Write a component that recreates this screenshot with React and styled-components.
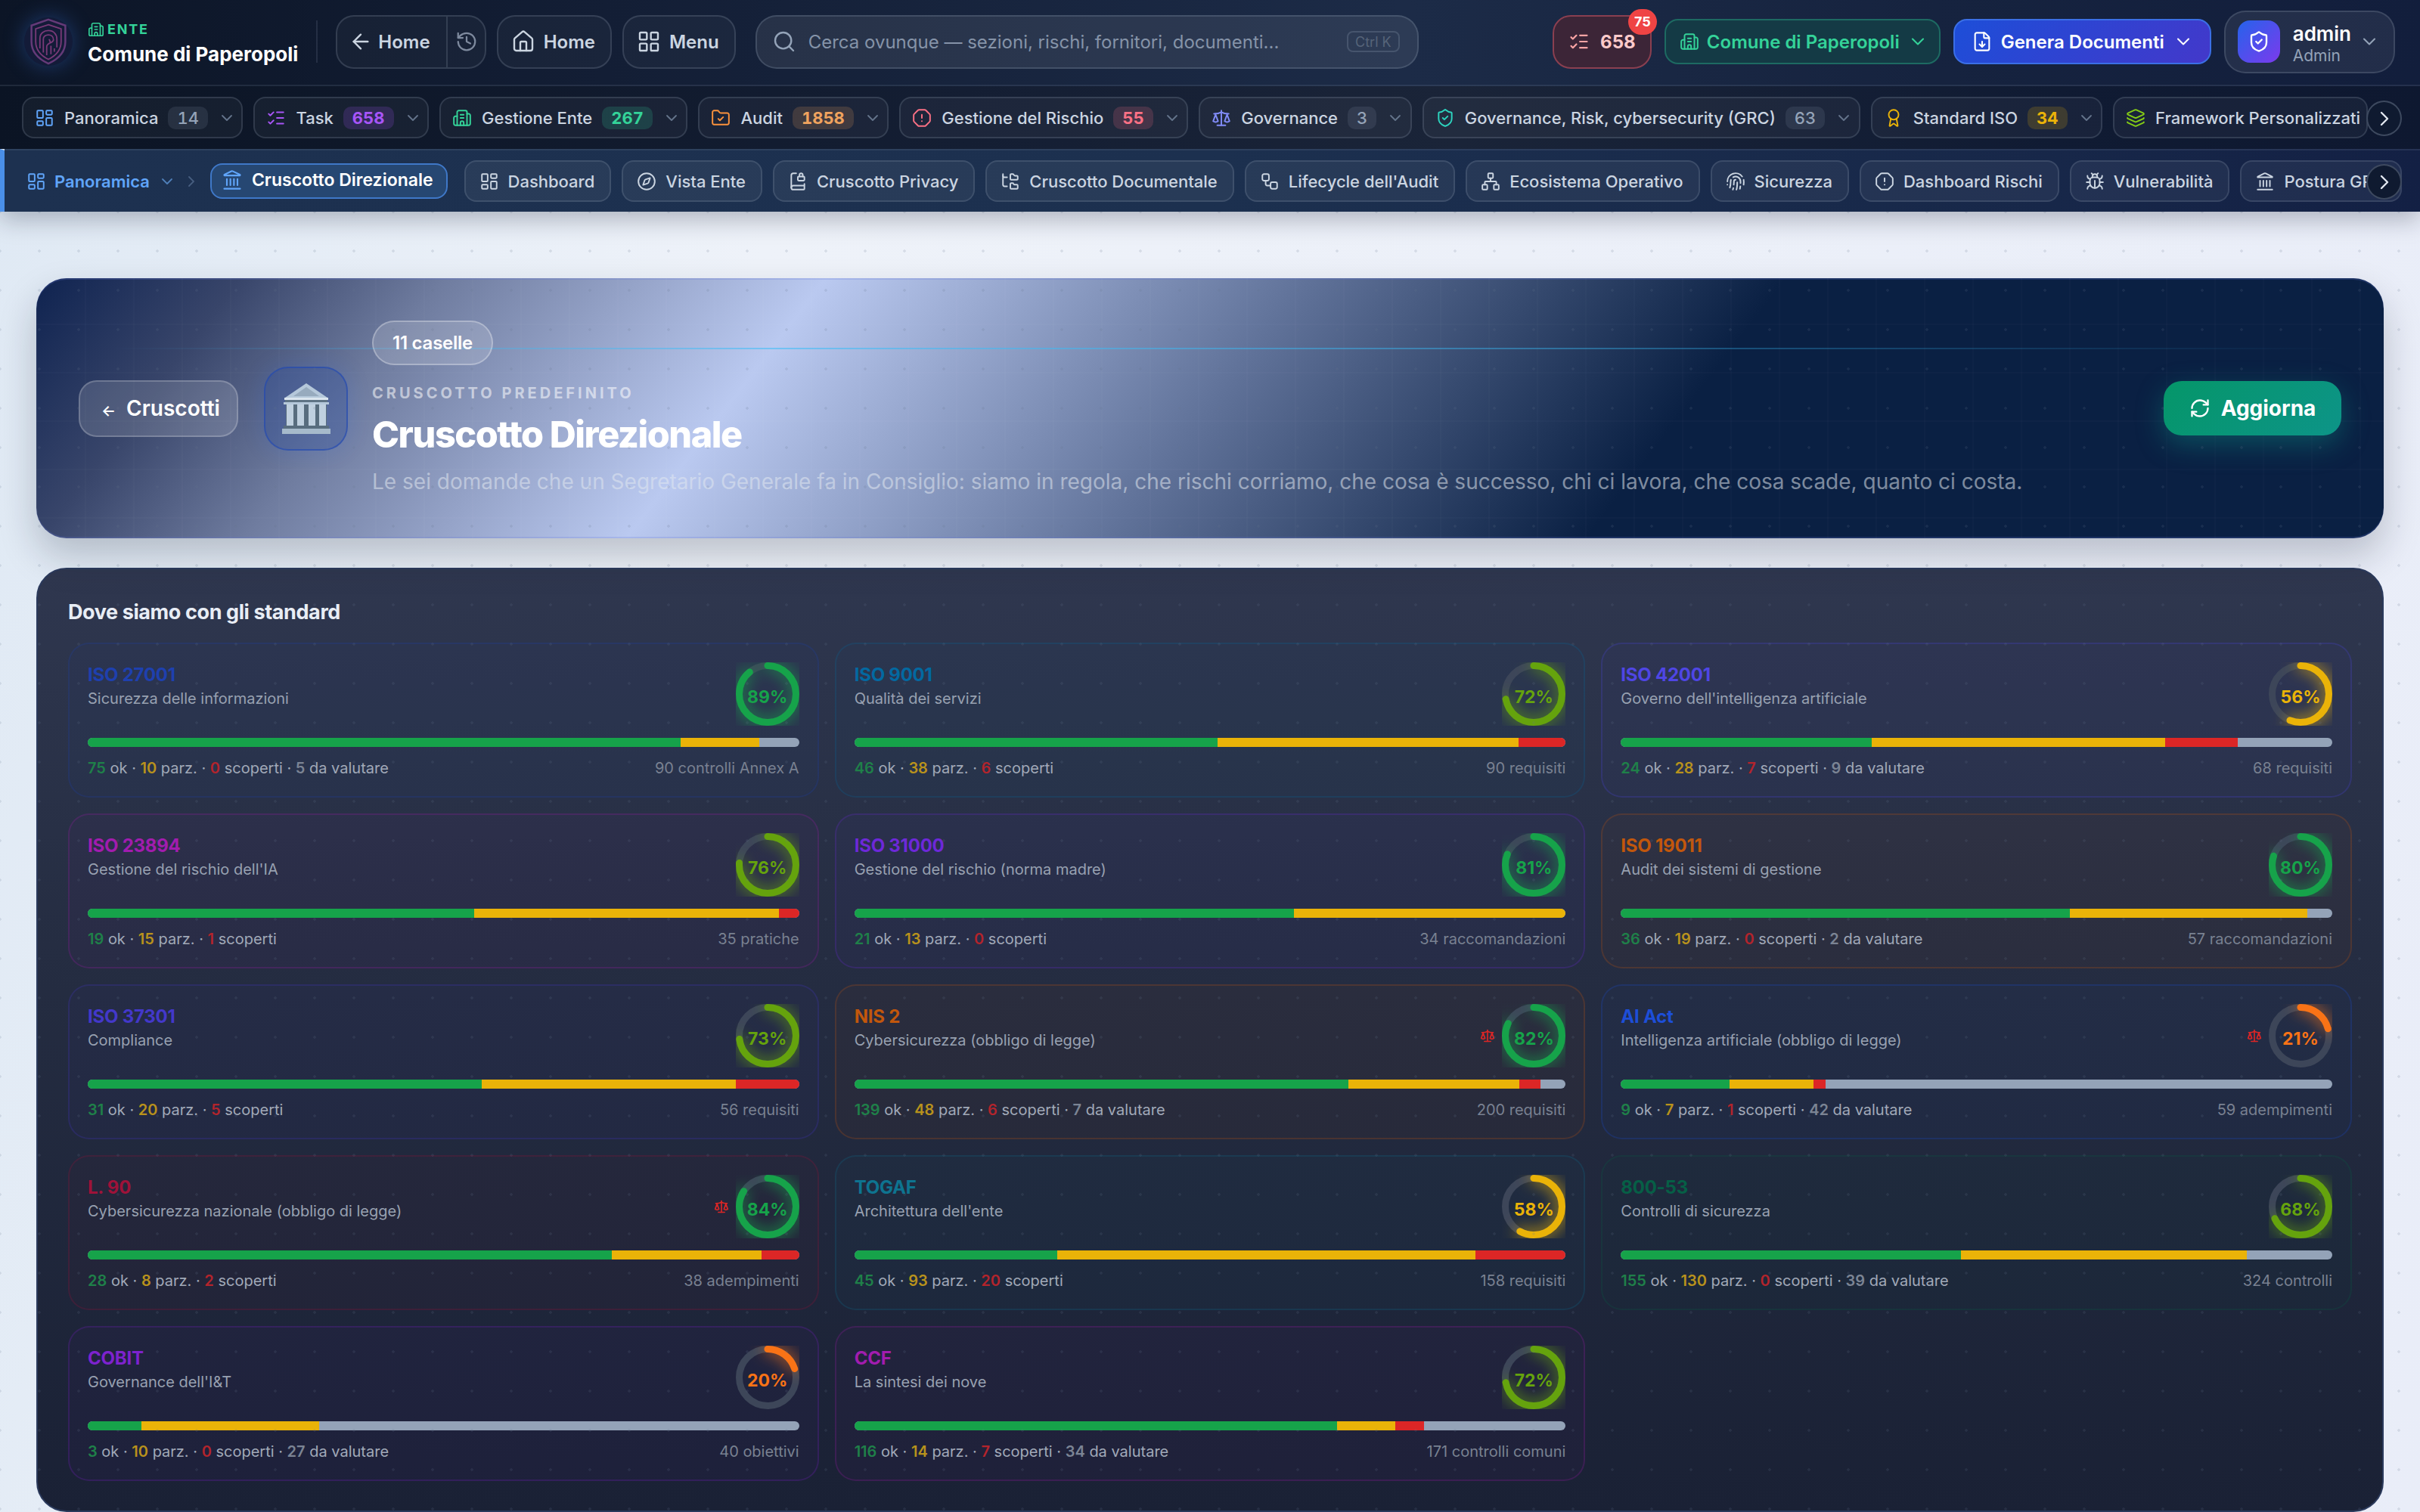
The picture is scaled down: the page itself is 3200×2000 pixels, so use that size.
import React from 'react';
import styled, { createGlobalStyle } from 'styled-components';
import {
  ArrowLeft, History, House, LayoutGrid, LayoutDashboard, Search, ListChecks, Building2, FolderCheck,
  OctagonAlert, Scale, ShieldCheck, Award, Layers, ChevronDown, ChevronRight, Landmark, Compass,
  BookLock, FolderTree, Workflow, Network, Fingerprint, Bug, FileDown, RefreshCw,
} from 'lucide-react';

const Global = createGlobalStyle`
  html, body { margin: 0; padding: 0; height: 2000px; overflow: hidden; }
  body { font-family: Inter, "Noto Sans", sans-serif; background: #eef1f8; }
  * { box-sizing: border-box; }
`;

const Page = styled.div`
  width: 3200px; height: 2000px; overflow: hidden; display: flex; flex-direction: column;
  background: linear-gradient(100deg, #dfe9f4 0%, #eef2f9 30%, #e9edf8 100%);
`;
const Header = styled.header`
  flex: none; position: relative; z-index: 2;
  box-shadow: 0 10px 30px rgba(15, 23, 42, .28);
`;
const TopRow = styled.div`
  height: 114px; display: flex; align-items: center; padding: 0 33px 2px 32px;
  background: linear-gradient(90deg, #0c1526 0%, #131e35 25%, #1c2b47 58%, #16233f 80%, #121e3c 100%);
  border-bottom: 2px solid rgba(148, 163, 184, .14);
`;
const Brand = styled.div`display: flex; align-items: center; gap: 20px; padding-right: 24px; border-right: 2px solid rgba(148,163,184,.16); height: 56px;`;
const LogoWrap = styled.div`width: 64px; height: 64px; flex: none; filter: drop-shadow(0 0 14px rgba(59,130,246,.35));`;
const BrandText = styled.div`display: flex; flex-direction: column; gap: 5px; padding-top: 6px;`;
const Eyebrow = styled.div`display: flex; align-items: center; gap: 4px; color: #34d399; font-size: 18px; font-weight: 700; letter-spacing: .1em; line-height: 22px;`;
const BrandName = styled.div`color: #fff; font-size: 26px; font-weight: 700; line-height: 34px; white-space: nowrap;`;
const TopGroup = styled.div`display: flex; align-items: center; gap: 14px; margin-left: 24px;`;
const GhostBtn = styled.div`
  height: 71px; display: flex; align-items: center; gap: 11px; padding: 0 20px 0 17px; color: #cbd5e1;
  font-size: 24px; font-weight: 600; border: 2px solid rgba(148,163,184,.22); border-radius: 24px;
  background: rgba(255,255,255,.03); white-space: nowrap;
`;
const Split = styled(GhostBtn)`padding: 0; gap: 0; overflow: hidden;`;
const SplitPart = styled.div`
  display: flex; align-items: center; gap: 7px; height: 100%; padding: ${p => p.$pad};
  & + & { border-left: 2px solid rgba(148,163,184,.22); }
`;
const SearchBox = styled.div`
  width: 877px; height: 71px; margin-left: 26px; display: flex; align-items: center; gap: 16px; padding: 0 23px 0 20px;
  background: rgba(255,255,255,.08); border: 2px solid rgba(148,163,184,.24); border-radius: 28px;
  color: #8593a8; font-size: 24px; white-space: nowrap;
`;
const SearchText = styled.span`flex: 1;`;
const Kbd = styled.span`
  height: 28px; padding: 0 9px; display: flex; align-items: center; font-size: 18px; color: #566479;
  border: 2px solid rgba(148,163,184,.25); border-radius: 8px;
`;
const TopRight = styled.div`margin-left: auto; display: flex; align-items: center; gap: 17px;`;
const Notif = styled.div`
  position: relative; width: 131px; height: 71px; display: flex; align-items: center; justify-content: center; gap: 14px;
  color: #fecaca; font-size: 24px; font-weight: 700; background: #3c2537; border: 2px solid #8a3f50; border-radius: 24px;
`;
const NotifBadge = styled.span`
  position: absolute; top: -10px; right: -9px; width: 38px; height: 34px; border-radius: 17px; background: #ef4444;
  color: #fff; font-size: 18px; font-weight: 700; display: flex; align-items: center; justify-content: center;
`;
const Pill = styled.div`
  height: 60px; display: flex; align-items: center; gap: ${p => p.$gap}px; padding: ${p => p.$pad}; font-size: 24px; font-weight: 600;
  border-radius: 18px; white-space: nowrap; color: ${p => p.$fg}; background: ${p => p.$bg}; border: 2px solid ${p => p.$bd};
`;
const UserBox = styled.div`
  height: 83px; display: flex; align-items: center; gap: 10px; padding: 0 18px 0 16px;
  background: rgba(255,255,255,.07); border: 2px solid rgba(148,163,184,.22); border-radius: 28px;
`;
const Avatar = styled.div`
  width: 56px; height: 56px; margin-right: 7px; border-radius: 16px; background: linear-gradient(135deg, #2563eb, #7c3aed);
  display: flex; align-items: center; justify-content: center; color: #fff;
`;
const UserText = styled.div`display: flex; flex-direction: column; padding-top: 8px;`;
const UserName = styled.span`color: #fff; font-size: 26px; font-weight: 600; line-height: 30px;`;
const UserRole = styled.span`color: #94a3b8; font-size: 21px; line-height: 28px;`;

const NavRow = styled.div`
  position: relative; display: flex; align-items: center;
  height: ${p => p.$h}px; padding: 0 24px 0 ${p => p.$left}px;
  background: ${p => p.$bg};
  ${p => p.$accent ? 'border-left: 6px solid #4a8fe8; border-top: 2px solid rgba(148,163,184,.14);' : ''}
`;
const Scroller = styled.div`flex: 1; min-width: 0; display: flex; align-items: center; gap: 14px; overflow: hidden;`;
const Chip = styled.div`
  flex: none; height: 55px; display: flex; align-items: center; gap: 13px; padding: 0 7.5px 0 15px; white-space: nowrap;
  font-size: 22px; font-weight: 500; color: #cbd5e1; border-radius: 16px;
  border: 2px solid rgba(148,163,184,.2); background: rgba(255,255,255,.04);
`;
const SubChip = styled(Chip)`padding: 0 20px 0 18px; gap: 12px; background: rgba(255,255,255,.055);`;
const ActiveChip = styled(Chip)`
  height: 47px; margin-right: 8px; gap: 12px; color: #fff; font-size: 23px; font-weight: 600; background: #264772; border-color: #3f78c8; padding: 0 17px 4px 13px;
`;
const ChipBadge = styled.span`
  height: 30px; padding: 0 12px; border-radius: 10px; display: flex; align-items: center;
  font-size: 22px; font-weight: ${p => p.$neutral ? 500 : 700}; font-variant-numeric: tabular-nums;
  color: ${p => p.$c}; background: ${p => p.$neutral ? 'rgba(148,163,184,.14)' : p.$c + '2e'};
`;
const Crumb = styled.div`
  flex: none; display: flex; align-items: center; gap: 11px; margin-right: 13px;
  color: #60a5fa; font-size: 22px; font-weight: 600;
`;
const CrumbDown = styled(ChevronDown)`margin-right: -3px;`;
const NextBtn = styled.div`
  position: absolute; right: 24px; top: ${p => p.$top}px; width: 47px; height: 47px; border-radius: 50%;
  display: flex; align-items: center; justify-content: center; color: #e2e8f0; background: #0f1a30;
  border: 2px solid rgba(148,163,184,.35);
`;

const Main = styled.main`
  position: relative; flex: 1; min-height: 0; padding: 88px 48px 0; display: flex; flex-direction: column; gap: 39px;
  &::after {
    content: ''; position: absolute; inset: 0; pointer-events: none;
    background-image: radial-gradient(circle, rgba(100,116,139,.17) 1.5px, transparent 2px);
    background-size: 52px 52px; background-position: -26px -26px;
  }
`;
const Hero = styled.section`
  position: relative; flex: none; height: 344px; overflow: hidden; border-radius: 40px; display: flex; align-items: center;
  padding: 0 56px 0 56px; gap: 34px;
  box-shadow: 0 24px 50px rgba(15,23,42,.22), inset 0 2px 0 rgba(99,120,220,.22), inset 0 -2px 0 rgba(99,120,220,.22);
  background: linear-gradient(127.5deg, #0f2350 0%, #38456a 8%, #6f7c9f 16%, #bac9f0 31%, #607299 50%, #0a2043 68.7%);
  &::before {
    content: ''; position: absolute; inset: 0; pointer-events: none;
    background-image: linear-gradient(rgba(255,255,255,.016) 2px, transparent 2px), linear-gradient(90deg, rgba(255,255,255,.016) 2px, transparent 2px);
    background-size: 64px 64px; background-position: 0 -4px;
  }
`;
const HeroLine = styled.div`
  position: absolute; left: 100px; right: 60px; top: 92px; height: 2px;
  background: linear-gradient(90deg, transparent, rgba(56,189,248,.55) 30%, rgba(56,189,248,.4) 65%, transparent);
`;
const BackBtn = styled.div`
  position: relative; flex: none; width: 211px; height: 75px; display: flex; align-items: center; gap: 14px; padding-left: 28px;
  color: #fff; font-size: 28px; font-weight: 600; border-radius: 24px; background: rgba(255,255,255,.14); border: 2px solid rgba(255,255,255,.2);
`;
const Arrow = styled.span`font-size: 20px; padding-top: 6px;`;
const IconBox = styled.div`
  position: relative; flex: none; width: 111px; height: 111px; border-radius: 32px;
  display: flex; align-items: center; justify-content: center;
  background: rgba(37,72,160,.3); border: 2px solid rgba(37,75,180,.65);
  box-shadow: 0 0 30px rgba(37,99,235,.18);
`;
const HeroText = styled.div`position: relative; flex: 1; min-width: 0; margin-left: -2px; display: flex; flex-direction: column; align-items: flex-start;`;
const CountChip = styled.div`
  height: 59px; padding: 0 25px; display: flex; align-items: center; border-radius: 30px; color: #fff; font-size: 24px; font-weight: 600; letter-spacing: -.01em;
  background: rgba(255,255,255,.15); border: 2px solid rgba(255,255,255,.28); margin-bottom: 25px;
`;
const HeroEyebrow = styled.div`color: rgba(255,255,255,.55); font-size: 20px; font-weight: 700; letter-spacing: .2em; line-height: 24px; margin-bottom: 12px;`;
const HeroTitle = styled.h1`margin: 0 0 12px; color: #fff; font-size: 48.5px; font-weight: 800; line-height: 62px; letter-spacing: -.03em;`;
const HeroSub = styled.p`margin: 0; color: rgba(226,232,240,.55); font-size: 28px; line-height: 38px; white-space: nowrap;`;
const Refresh = styled.div`
  position: relative; flex: none; width: 235px; height: 72px; display: flex; align-items: center; justify-content: center; gap: 14px;
  color: #fff; font-size: 28px; font-weight: 700; border-radius: 24px;
  background: linear-gradient(135deg, #059669, #0d9488); box-shadow: 0 12px 36px rgba(13,148,136,.4);
`;

const Panel = styled.section`
  flex: none; height: 1249px; padding: 38px 40px 0; border-radius: 40px; border: 2px solid #2b3a5c;
  background: linear-gradient(180deg, #2f374f 0%, #252d42 40%, #1a2135 100%);
`;
const PanelTitle = styled.h2`margin: 0 0 21px; color: #e8edf5; font-size: 27px; font-weight: 700; line-height: 38px; letter-spacing: -.015em;`;
const Grid = styled.div`display: grid; grid-template-columns: repeat(3, 1fr); gap: 21px;`;
const Card = styled.article`
  height: 205px; padding: 24px; display: flex; flex-direction: column; border-radius: 28px;
  border: 2px solid ${p => p.$c}38; background: ${p => p.$c}0a;
`;
const CardHead = styled.div`display: flex; align-items: center; gap: 9px; height: 84px;`;
const CardTitles = styled.div`flex: 1; min-width: 0; align-self: flex-start; padding-top: 2px;`;
const CardName = styled.div`color: ${p => p.$c}; font-size: 24px; font-weight: 700; line-height: 30px; letter-spacing: -.01em;`;
const CardDesc = styled.div`color: #98a1b1; font-size: 20px; line-height: 30px; margin-top: 1px;`;
const LawIcon = styled(Scale)`color: #dc2626; flex: none;`;
const RingWrap = styled.div`position: relative; flex: none; width: 84px; height: 84px;`;
const RingSvg = styled.svg`display: block;`;
const RingArc = styled.circle`filter: drop-shadow(0 0 10px ${p => p.$c});`;
const RingLabel = styled.div`
  position: absolute; inset: 8px 0 0; display: flex; align-items: center; justify-content: center;
  color: ${p => p.$c}; font-size: 23px; font-weight: 700;
`;
const Bar = styled.div`display: flex; height: 12px; margin-top: 16px; border-radius: 6px; overflow: hidden; background: #94a3b8;`;
const BarPart = styled.div`height: 100%; background: ${p => p.$c};`;
const CardFoot = styled.div`display: flex; justify-content: space-between; margin-top: 15px; font-size: 20px; line-height: 26px; color: #a1a9b8;`;
const Num = styled.b`font-weight: 600; color: ${p => p.$c};`;
const Total = styled.span`color: #798191;`;

const Logo = () => (
  <svg viewBox="0 0 64 64" width="64" height="64">
    <circle cx="32" cy="32" r="32" fill="#131b38" />
    <g fill="none" stroke="#7a3a78" strokeWidth="1.6" transform="translate(32 32) scale(1.12) translate(-32 -32)">
      <path d="M32 6 L52 13 V32 C52 45 43 53 32 58 C21 53 12 45 12 32 V13 Z" stroke="#643a78" strokeWidth="2.2" />
      <path d="M32 12 L47 17 V32 C47 42 40 49 32 53 C24 49 17 42 17 32 V17 Z" />
      <path d="M22 40 V28 C22 22 27 19 32 19 C38 19 42 23 42 29 V39" />
      <path d="M26 45 V29 C26 26 29 24 32 24 C35 24 38 26 38 30 C38 34 30 33 30 38 V48" />
      <path d="M33 29 C33 31 34 30 34 33 M35 37 V47 M39 40 V44" />
    </g>
  </svg>
);

const Temple = () => (
  <svg viewBox="0 0 66 67" width="66" height="67">
    <path d="M33 0 L61 19 H5 Z" fill="#b5c8da" />
    <path d="M33 5 L50 17 H16 Z" fill="#97abbe" />
    <rect x="4" y="19" width="58" height="3" fill="#dbe6ef" />
    <rect x="5" y="22" width="56" height="3" fill="#5f7485" />
    <rect x="3" y="25" width="60" height="3" fill="#b5c8da" />
    <rect x="6" y="28" width="54" height="30" fill="#586d7e" />
    <g fill="#bfd0df">
      <rect x="7" y="28" width="9" height="30" /><rect x="21" y="28" width="9" height="30" /><rect x="36" y="28" width="9" height="30" /><rect x="50" y="28" width="9" height="30" />
    </g>
    <rect x="3" y="56" width="60" height="4" fill="#586d7e" />
    <rect x="1" y="60" width="64" height="7" fill="#a6bacb" />
  </svg>
);

const Ring = ({ pct, color }) => {
  const r = 37.5;
  const len = 2 * Math.PI * r;
  return (
    <RingWrap>
      <RingSvg viewBox="0 0 84 84" width="84" height="84">
        <circle cx="42" cy="42" r={r} fill="none" stroke="#3d4659" strokeWidth="9" />
        <RingArc $c={color} cx="42" cy="42" r={r} fill="none" stroke={color} strokeWidth="9" strokeLinecap="round"
          strokeDasharray={`${len * pct / 100} ${len}`} transform="rotate(-90 42 42)" />
      </RingSvg>
      <RingLabel $c={color}>{pct}%</RingLabel>
    </RingWrap>
  );
};

const G = '#16a34a', L = '#65a30d', Y = '#eab308', O = '#f97316';
const cards = [
  ['ISO 27001', 'Sicurezza delle informazioni', 89, G, 75, 10, 0, 5, '90 controlli Annex A', '#1e40af'],
  ['ISO 9001', 'Qualità dei servizi', 72, L, 46, 38, 6, 0, '90 requisiti', '#0369a1'],
  ['ISO 42001', "Governo dell'intelligenza artificiale", 56, Y, 24, 28, 7, 9, '68 requisiti', '#4f46e5'],
  ['ISO 23894', "Gestione del rischio dell'IA", 76, L, 19, 15, 1, 0, '35 pratiche', '#a21caf'],
  ['ISO 31000', 'Gestione del rischio (norma madre)', 81, G, 21, 13, 0, 0, '34 raccomandazioni', '#6d28d9'],
  ['ISO 19011', 'Audit dei sistemi di gestione', 80, G, 36, 19, 0, 2, '57 raccomandazioni', '#c2570c'],
  ['ISO 37301', 'Compliance', 73, L, 31, 20, 5, 0, '56 requisiti', '#4338ca'],
  ['NIS 2', 'Cybersicurezza (obbligo di legge)', 82, G, 139, 48, 6, 7, '200 requisiti', '#c2570c', true],
  ['AI Act', 'Intelligenza artificiale (obbligo di legge)', 21, O, 9, 7, 1, 42, '59 adempimenti', '#1d4ed8', true],
  ['L. 90', 'Cybersicurezza nazionale (obbligo di legge)', 84, G, 28, 8, 2, 0, '38 adempimenti', '#9f1239', true],
  ['TOGAF', "Architettura dell'ente", 58, Y, 45, 93, 20, 0, '158 requisiti', '#0e7490'],
  ['800-53', 'Controlli di sicurezza', 68, L, 155, 130, 0, 39, '324 controlli', '#065f46'],
  ['COBIT', "Governance dell'I&T", 20, O, 3, 10, 0, 27, '40 obiettivi', '#7e22ce'],
  ['CCF', 'La sintesi dei nove', 72, L, 116, 14, 7, 34, '171 controlli comuni', '#a21caf'],
];

const mainNav = [
  [LayoutDashboard, 'Panoramica', '14', '#60a5fa', '#94a3b8', true],
  [ListChecks, 'Task', '658', '#a855f7', '#a855f7'],
  [Building2, 'Gestione Ente', '267', '#34d399', '#34d399'],
  [FolderCheck, 'Audit', '1858', '#fb923c', '#f0a35e'],
  [OctagonAlert, 'Gestione del Rischio', '55', '#fb7185', '#fb7185'],
  [Scale, 'Governance', '3', '#818cf8', '#94a3b8', true],
  [ShieldCheck, 'Governance, Risk, cybersecurity (GRC)', '63', '#2dd4bf', '#94a3b8', true],
  [Award, 'Standard ISO', '34', '#eab308', '#eab308'],
  [Layers, 'Framework Personalizzati', null, '#84cc16'],
];
const subNav = [
  [LayoutDashboard, 'Dashboard'], [Compass, 'Vista Ente'], [BookLock, 'Cruscotto Privacy'],
  [FolderTree, 'Cruscotto Documentale'], [Workflow, "Lifecycle dell'Audit"], [Network, 'Ecosistema Operativo'],
  [Fingerprint, 'Sicurezza'], [OctagonAlert, 'Dashboard Rischi'], [Bug, 'Vulnerabilità'], [Landmark, 'Postura GRC'],
];

export default function App() {
  return (
    <Page>
      <Global />
      <Header>
        <TopRow>
          <Brand>
            <LogoWrap><Logo /></LogoWrap>
            <BrandText>
              <Eyebrow><Building2 size={22} strokeWidth={1.8} />ENTE</Eyebrow>
              <BrandName>Comune di Paperopoli</BrandName>
            </BrandText>
          </Brand>
          <TopGroup>
            <Split>
              <SplitPart $pad="0 21px 0 15px"><ArrowLeft size={32} strokeWidth={1.8} />Home</SplitPart>
              <SplitPart $pad="0 9px 0 10px"><History size={30} strokeWidth={1.8} color="#7e8a9e" /></SplitPart>
            </Split>
            <GhostBtn><House size={32} strokeWidth={1.8} />Home</GhostBtn>
            <GhostBtn><LayoutGrid size={32} strokeWidth={1.8} />Menu</GhostBtn>
          </TopGroup>
          <SearchBox>
            <Search size={32} strokeWidth={1.8} color="#94a3b8" />
            <SearchText>Cerca ovunque — sezioni, rischi, fornitori, documenti...</SearchText>
            <Kbd>Ctrl K</Kbd>
          </SearchBox>
          <TopRight>
            <Notif>
              <ListChecks size={28} strokeWidth={1.9} color="#fca5a5" />658
              <NotifBadge>75</NotifBadge>
            </Notif>
            <Pill $gap={10} $pad="0 14px 0 18px" $fg="#34d399" $bg="#143a45" $bd="#1d6a62"><Building2 size={26} strokeWidth={1.8} />Comune di Paperopoli<ChevronDown size={28} strokeWidth={1.8} /></Pill>
            <Pill $gap={11} $pad="0 21px 0 22px" $fg="#fff" $bg="linear-gradient(135deg,#1d4ed8,#4338ca)" $bd="#3b6fe6"><FileDown size={28} strokeWidth={1.8} />Genera Documenti<ChevronDown size={28} strokeWidth={1.8} /></Pill>
            <UserBox>
              <Avatar><ShieldCheck size={30} strokeWidth={1.9} /></Avatar>
              <UserText><UserName>admin</UserName><UserRole>Admin</UserRole></UserText>
              <ChevronDown size={28} strokeWidth={1.8} color="#94a3b8" />
            </UserBox>
          </TopRight>
        </TopRow>
        <NavRow $h={83} $left={29} $bg="linear-gradient(90deg,#0b1424 0%,#141e33 40%,#1a2438 60%,#101b33 85%,#0e1830 100%)">
          <Scroller>
            {mainNav.map(([I, label, n, ic, bc, neutral]) => (
              <Chip key={label}>
                <I size={26} strokeWidth={1.8} color={ic} />
                {label}
                {n && <ChipBadge $c={bc} $neutral={neutral}>{n}</ChipBadge>}
                {n && <ChevronDown size={24} strokeWidth={1.8} color="#64748b" />}
              </Chip>
            ))}
          </Scroller>
          <NextBtn $top={19}><ChevronRight size={32} strokeWidth={1.8} /></NextBtn>
        </NavRow>
        <NavRow $h={83} $left={29} $accent $bg="linear-gradient(90deg,#1d3150 0%,#1c304f 50%,#172749 85%,#132044 100%)">
          <Crumb>
            <LayoutDashboard size={26} strokeWidth={1.8} />Panoramica<CrumbDown size={24} strokeWidth={1.8} color="#4f7fb8" />
            <ChevronRight size={24} strokeWidth={1.8} color="#475e80" />
          </Crumb>
          <Scroller>
            <ActiveChip><Landmark size={28} strokeWidth={1.8} color="#60a5fa" />Cruscotto Direzionale</ActiveChip>
            {subNav.map(([I, label]) => (
              <SubChip key={label}><I size={26} strokeWidth={1.8} color="#cbd5e1" />{label}</SubChip>
            ))}
          </Scroller>
          <NextBtn $top={18}><ChevronRight size={32} strokeWidth={1.8} /></NextBtn>
        </NavRow>
      </Header>
      <Main>
        <Hero>
          <HeroLine />
          <BackBtn><Arrow>←</Arrow>Cruscotti</BackBtn>
          <IconBox><Temple /></IconBox>
          <HeroText>
            <CountChip>11 caselle</CountChip>
            <HeroEyebrow>CRUSCOTTO PREDEFINITO</HeroEyebrow>
            <HeroTitle>Cruscotto Direzionale</HeroTitle>
            <HeroSub>Le sei domande che un Segretario Generale fa in Consiglio: siamo in regola, che rischi corriamo, che cosa è successo, chi ci lavora, che cosa scade, quanto ci costa.</HeroSub>
          </HeroText>
          <Refresh><RefreshCw size={28} />Aggiorna</Refresh>
        </Hero>
        <Panel>
          <PanelTitle>Dove siamo con gli standard</PanelTitle>
          <Grid>
            {cards.map(([name, desc, pct, color, ok, pa, sc, dv, total, tint, law]) => {
              const sum = ok + pa + sc + dv;
              return (
                <Card key={name} $c={tint}>
                  <CardHead>
                    <CardTitles>
                      <CardName $c={tint}>{name}</CardName>
                      <CardDesc>{desc}</CardDesc>
                    </CardTitles>
                    {law && <LawIcon size={20} />}
                    <Ring pct={pct} color={color} />
                  </CardHead>
                  <Bar>
                    <BarPart $c="#16a34a" style={{ width: `${ok / sum * 100}%` }} />
                    <BarPart $c="#eab308" style={{ width: `${pa / sum * 100}%` }} />
                    <BarPart $c="#dc2626" style={{ width: `${sc / sum * 100}%` }} />
                  </Bar>
                  <CardFoot>
                    <span>
                      <Num $c="#1f8049">{ok}</Num> ok · <Num $c="#b8921c">{pa}</Num> parz. · <Num $c="#b3242c">{sc}</Num> scoperti
                      {dv > 0 && <> · <Num $c="#7b8494">{dv}</Num> da valutare</>}
                    </span>
                    <Total>{total}</Total>
                  </CardFoot>
                </Card>
              );
            })}
          </Grid>
        </Panel>
      </Main>
    </Page>
  );
}
